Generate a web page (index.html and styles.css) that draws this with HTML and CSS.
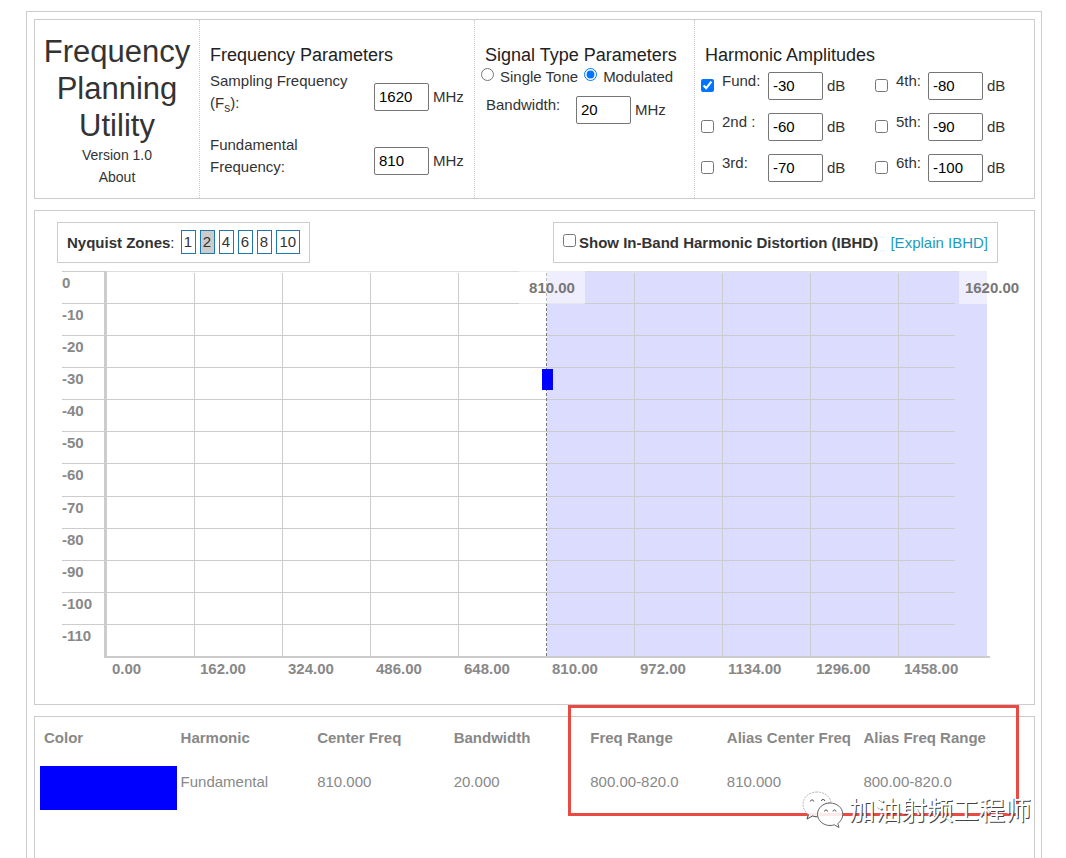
FILE: index.html
```html
<!DOCTYPE html>
<html lang="en">
<head>
<meta charset="utf-8">
<title>Frequency Planning Utility</title>
<link rel="stylesheet" href="styles.css">
</head>
<body>
<main class="app">
  <section class="panel settings">
    <header class="col brand">
      <h1>Frequency Planning Utility</h1>
      <p>Version 1.0</p>
      <p><a href="#about">About</a></p>
    </header>

    <div class="col">
      <h2>Frequency Parameters</h2>
      <div class="freq-row">
        <label for="fs">Sampling Frequency (F<sub>s</sub>):</label>
        <span class="field"><input class="num" id="fs" type="text" value="1620">MHz</span>
      </div>
      <div class="freq-row">
        <label for="f0">Fundamental Frequency:</label>
        <span class="field"><input class="num" id="f0" type="text" value="810">MHz</span>
      </div>
    </div>

    <div class="col">
      <h2>Signal Type Parameters</h2>
      <div class="radios">
        <label><input type="radio" name="signal">Single Tone</label>
        <label><input type="radio" name="signal" checked>Modulated</label>
      </div>
      <div class="band-row">
        <label for="bw">Bandwidth:</label>
        <span class="field"><input class="num" id="bw" type="text" value="20">MHz</span>
      </div>
    </div>

    <div class="col">
      <h2>Harmonic Amplitudes</h2>
      <div class="harmonics">
        <input type="checkbox" id="c1" checked><label for="c1">Fund:</label><span class="field"><input class="num" type="text" value="-30" aria-label="Fundamental amplitude">dB</span>
        <input type="checkbox" id="c4"><label for="c4">4th:</label><span class="field"><input class="num" type="text" value="-80" aria-label="4th amplitude">dB</span>
        <input type="checkbox" id="c2"><label for="c2">2nd :</label><span class="field"><input class="num" type="text" value="-60" aria-label="2nd amplitude">dB</span>
        <input type="checkbox" id="c5"><label for="c5">5th:</label><span class="field"><input class="num" type="text" value="-90" aria-label="5th amplitude">dB</span>
        <input type="checkbox" id="c3"><label for="c3">3rd:</label><span class="field"><input class="num" type="text" value="-70" aria-label="3rd amplitude">dB</span>
        <input type="checkbox" id="c6"><label for="c6">6th:</label><span class="field"><input class="num" type="text" value="-100" aria-label="6th amplitude">dB</span>
      </div>
    </div>
  </section>

  <section class="panel chart-panel">
    <div class="toolbar">
      <div class="box zones">
        <span><b>Nyquist Zones</b>:</span>
        <button type="button">1</button>
        <button type="button" class="active">2</button>
        <button type="button">4</button>
        <button type="button">6</button>
        <button type="button">8</button>
        <button type="button">10</button>
      </div>
      <div class="box ibhd">
        <input type="checkbox" id="ibhd"><label for="ibhd">Show In-Band Harmonic Distortion (IBHD)</label>
        <a href="#ibhd-help">[Explain IBHD]</a>
      </div>
    </div>

    <div class="chart">
      <div class="y-axis">
        <span>0</span><span>-10</span><span>-20</span><span>-30</span><span>-40</span><span>-50</span><span>-60</span><span>-70</span><span>-80</span><span>-90</span><span>-100</span><span>-110</span>
      </div>
      <div class="plot">
        <div class="layer shade"></div>
        <div class="layer h-lines"><i></i><i></i><i></i><i></i><i></i><i></i><i></i><i></i><i></i><i></i><i></i><i></i></div>
        <div class="layer v-lines"><i></i><i></i><i></i><i></i><i class="zone-edge"></i><i></i><i></i><i></i><i></i><i></i></div>
        <div class="layer marks">
          <span class="tag tag-mid">810.00</span>
          <span class="tag tag-end">1620.00</span>
          <span class="signal"></span>
        </div>
      </div>
      <div class="x-axis">
        <span>0.00</span><span>162.00</span><span>324.00</span><span>486.00</span><span>648.00</span><span>810.00</span><span>972.00</span><span>1134.00</span><span>1296.00</span><span>1458.00</span>
      </div>
    </div>
  </section>

  <section class="panel results">
    <table>
      <thead>
        <tr><th>Color</th><th>Harmonic</th><th>Center Freq</th><th>Bandwidth</th><th>Freq Range</th><th>Alias Center Freq</th><th>Alias Freq Range</th></tr>
      </thead>
      <tbody>
        <tr><td class="swatch"></td><td>Fundamental</td><td>810.000</td><td>20.000</td><td>800.00-820.0</td><td>810.000</td><td>800.00-820.0</td></tr>
      </tbody>
    </table>
    <div class="callout"></div>
    <div class="watermark">
      <svg width="42" height="38" viewBox="0 0 42 38" aria-hidden="true">
        <path class="rim" d="M15 1C7 1 1 6.500 1 13.500c0 4 2 7.500 5.500 10L5 28l5.500-3c1.500.5 3 .8 5 .8h2C15 17 22 11 29 11.500 28 5 22 1 15 1z"/>
        <path class="tail" d="M6.500 23.500L5 28l5.500-3c1.500.5 3 .8 5 .8"/>
        <path class="rim dark" d="M28 12c-7 0-12.500 5-12.500 11.200S21 34.500 28 34.500c1.600 0 3-.3 4.300-.7L37 36.500l-1.200-4c3-2.200 5-5.400 5-9.300C40.800 17 35 12 28 12z"/>
        <path class="eye" d="M8.500 10.500a1.600 1.600 0 0 1 3.200 0M19.500 10a1.600 1.600 0 0 1 3.200 0M22.500 20.500a1.500 1.500 0 0 1 3 0M31 20.500a1.500 1.500 0 0 1 3 0"/>
      </svg>
      <span lang="zh">加油射频工程师</span>
    </div>
  </section>
</main>
</body>
</html>
```
FILE: styles.css
```css
* { box-sizing: border-box; }

body {
  margin: 0;
  padding: 11px 24px 0 26px;
  background: #fff;
  color: #333;
  font: 15px/22px "Liberation Sans", Arial, sans-serif;
}

h1, h2, p { margin: 0; font-weight: 400; }
a { color: inherit; text-decoration: none; }
input { margin: 0; }

.app {
  display: flex;
  flex-direction: column;
  min-height: calc(100vh - 11px);
  padding: 7px 6px 0 7px;
  border: 1px solid #ccc;
  border-bottom: 0;
}

.panel { border: 1px solid #ccc; }

/* Settings */
.settings {
  display: grid;
  grid-template-columns: 165fr 275fr 220fr 339fr;
  min-height: 180px;
  margin-bottom: 11px;
}

.col { min-width: 0; padding: 24px 0 14px 6px; }
.col:not(:last-child) { border-right: 1px dotted #ccc; }

.brand { padding: 13px 4px 8px; text-align: center; font-size: 14px; }
.brand h1 { font-size: 31px; line-height: 37px; }

h2 { margin-left: 4px; font-size: 18px; line-height: 22px; white-space: nowrap; color: #222; }

.field { display: flex; align-items: center; gap: 4px; }

.num {
  width: 55px;
  height: 28px;
  padding: 0 4px 1px;
  border: 1px solid #767676;
  border-radius: 2px;
  background: #fff;
  color: #000;
  font: 15px "Liberation Sans", Arial, sans-serif;
}

.freq-row {
  display: grid;
  grid-template-columns: 148px auto;
  column-gap: 16px;
  justify-content: start;
  align-items: center;
  margin: 4px 0 0 4px;
}
.freq-row + .freq-row { margin-top: 20px; }
.freq-row .field { padding-top: 9px; }
sub { font-size: 12px; line-height: 0; }

.radios { display: flex; gap: 6px; white-space: nowrap; }
.radios label { display: flex; gap: 6px; }
.radios input { width: 13px; height: 13px; margin-top: 2px; }

.band-row { display: flex; gap: 16px; margin: 6px 0 0 5px; }
.band-row label { width: 74px; }
.band-row .field { padding-top: 2px; }

.harmonics {
  display: grid;
  grid-template-columns: 21px 46px 107px 21px 32px auto;
  row-gap: 13px;
  justify-content: start;
  align-items: center;
  margin-top: 6px;
}
.harmonics > input { width: 13px; height: 13px; margin-bottom: 2px; }
.harmonics > label { align-self: start; line-height: 18px; }

/* Chart */
.chart-panel { margin-bottom: 11px; padding: 11px 36px 24px 22px; }

.toolbar { display: flex; justify-content: space-between; }

.box { display: flex; align-items: center; height: 41px; padding: 0 9px; border: 1px solid #ccc; }

.zones { gap: 4px; }
.zones span { margin-right: 2px; }
.zones button {
  min-width: 15px;
  height: 24px;
  margin-bottom: 2px;
  padding: 0 2px;
  border: 1px solid #1f77b0;
  background: #fff;
  color: #333;
  font: 15px/20px "Liberation Sans", Arial, sans-serif;
}
.zones button:last-child { padding: 0 3px; }
.zones .active { background: #ccc; }

.ibhd { width: 445px; }
.ibhd input { width: 13px; height: 13px; margin: 0 3px 5px 0; }
.ibhd label { font-weight: 700; }
.ibhd a { margin-left: auto; color: #1b9bbd; }

.chart {
  display: grid;
  grid-template-columns: 42px minmax(0, 1fr);
  margin: 8px 8px 0 5px;
  color: #888;
  font-weight: 700;
}

.y-axis { display: grid; grid-template-rows: repeat(12, 1fr); padding-bottom: 2px; }
.y-axis span { border-top: 1px solid #ccc; line-height: 22px; }

.plot {
  display: grid;
  height: 387px;
  padding-right: 3px;
  border-left: 3px solid #ccc;
  border-bottom: 2px solid #ccc;
}
.layer { grid-area: 1 / 1; min-width: 0; }
.shade { margin-left: 50%; background: #dcdcff; }

.h-lines { display: grid; grid-template-rows: repeat(12, 1fr); }
.h-lines i { margin-right: 32px; border-top: 1px solid #ccc; }
.h-lines i:first-child { margin-right: 0; border-color: #ddd; }

.v-lines { display: grid; grid-template-columns: repeat(10, 1fr); padding-top: 2px; }
.v-lines i { border-right: 1px solid #ccc; }
.v-lines i:last-child { border-right: 0; }
.v-lines .zone-edge { border-right: 1px dashed #777; }

.marks { position: relative; }
.tag {
  position: absolute;
  top: 0;
  width: 66px;
  background: rgba(255, 255, 255, .5);
  color: #777;
  line-height: 33px;
  text-align: center;
}
.tag-mid { left: calc(50% - 28px); }
.tag-end { left: calc(100% - 28px); }
.signal { position: absolute; top: 98px; left: calc(50% - 5px); width: 11px; height: 21px; background: #00f; }

.x-axis {
  grid-column: 2;
  display: grid;
  grid-template-columns: repeat(10, 1fr);
  padding-right: 3px;
  margin-left: 3px;
}
.x-axis span { padding-left: 5px; }

/* Results */
.results { position: relative; flex: 1; padding: 5px 38px 0 5px; border-bottom: 0; color: #888; }

table { width: 100%; border-collapse: collapse; table-layout: fixed; }
th, td { height: 44px; padding: 5px 4px; text-align: left; vertical-align: top; white-space: nowrap; }
.swatch { background: #00f; }

.callout {
  position: absolute;
  top: -12px;
  right: 15px;
  left: 533px;
  height: 111px;
  border: 3px solid #ea4a44;
}

.watermark {
  position: absolute;
  top: 74px;
  right: 3px;
  display: flex;
  align-items: center;
  gap: 5px;
  color: #fff;
  font: 26px/38px "Noto Sans CJK SC", sans-serif;
  text-shadow: 1px 1px 0 #444;
  white-space: nowrap;
}
.watermark span { margin-top: -2px; }
.rim { fill: rgba(255, 255, 255, .88); stroke: #bbb; stroke-width: 1; stroke-dasharray: 2 1; }
.tail { fill: none; stroke: #555; stroke-width: 1; }
.dark { stroke: #666; stroke-dasharray: none; }
.eye { fill: none; stroke: #555; stroke-width: 1; }
```
